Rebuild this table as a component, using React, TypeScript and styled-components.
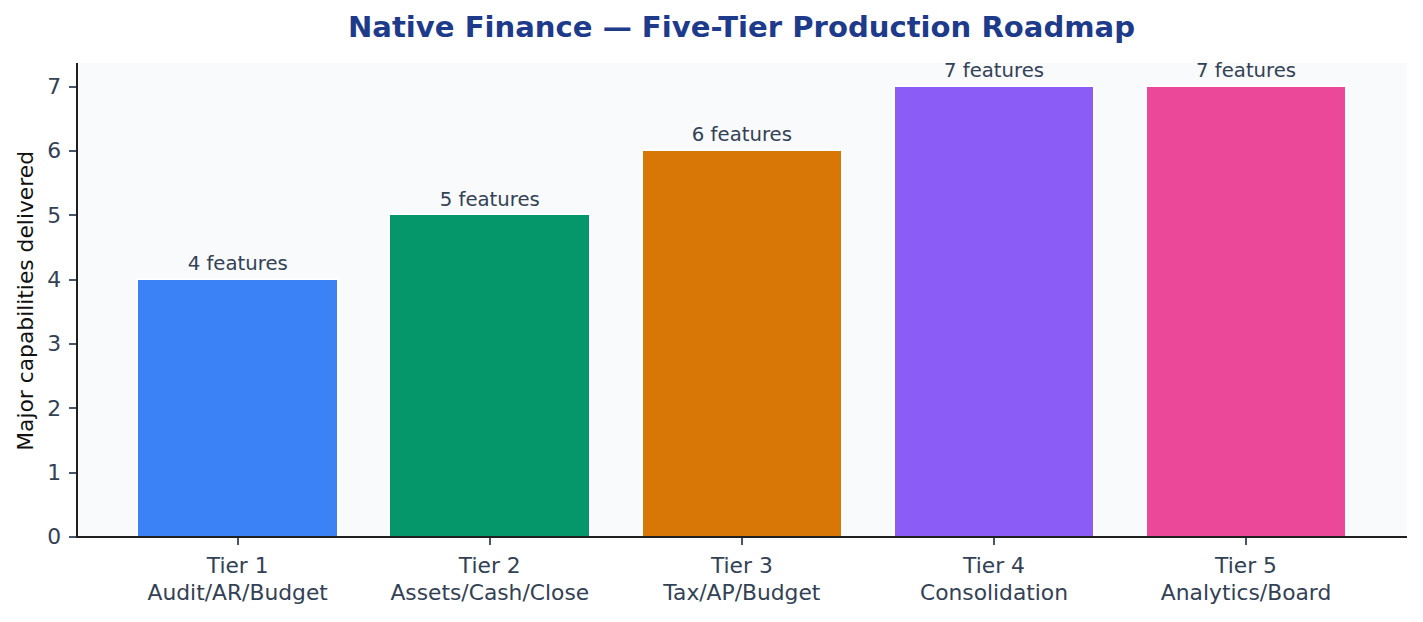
import React from "react";
import styled, { createGlobalStyle } from "styled-components";

const UNIT = 64.33;
const COL = 252.1;

const GlobalStyle = createGlobalStyle`
  html, body {
    margin: 0;
    padding: 0;
    background: #ffffff;
  }
  body {
    width: 1423px;
    height: 622px;
    overflow: hidden;
    font-family: "DejaVu Sans", "Liberation Sans", sans-serif;
  }
`;

const Figure = styled.div`
  width: 1423px;
  height: 622px;
  box-sizing: border-box;
  padding-top: 9.8px;
  display: grid;
  grid-template-columns: 47px 29px 1331px;
  grid-template-rows: 34px 19.2px 475.1px auto;
`;

const Title = styled.h1`
  grid-column: 3;
  grid-row: 1;
  margin: 0;
  font-size: 29.1px;
  line-height: 34px;
  font-weight: 700;
  color: #1e3a8a;
  text-align: center;
  white-space: nowrap;
`;

const YLabelCell = styled.div`
  grid-column: 1;
  grid-row: 3;
  display: flex;
  align-items: center;
  justify-content: center;
  padding-left: 4px;
`;

const YLabel = styled.div`
  writing-mode: vertical-rl;
  transform: rotate(180deg);
  font-size: 21.8px;
  line-height: 25.4px;
  color: #111111;
  white-space: nowrap;
`;

const YAxis = styled.div`
  grid-column: 2;
  grid-row: 3;
  align-self: end;
  margin-bottom: -31.17px;
  display: flex;
  flex-direction: column-reverse;
`;

const YTick = styled.div`
  height: ${UNIT}px;
  display: flex;
  align-items: center;
  justify-content: flex-end;
  gap: 8px;
`;

const TickLabel = styled.span`
  font-size: 21.8px;
  line-height: 25.4px;
  color: #334155;
  white-space: nowrap;
`;

const YTickMark = styled.span`
  flex: none;
  width: 7px;
  height: 2px;
  background: #475569;
`;

const Plot = styled.div`
  grid-column: 3;
  grid-row: 3;
  box-sizing: border-box;
  height: 475.1px;
  background: #f8fafc;
  border-left: 2px solid #1f1f1f;
  border-bottom: 2px solid #1f1f1f;
  padding-left: 33.65px;
  display: grid;
  grid-template-columns: repeat(5, ${COL}px);
  grid-template-rows: minmax(0, 1fr);
  overflow: visible;
`;

const BarSlot = styled.div`
  display: flex;
  flex-direction: column;
  align-items: center;
  justify-content: flex-end;
  min-height: 0;
  height: 100%;
`;

const BarLabel = styled.span`
  flex: none;
  font-size: 19.7px;
  line-height: 23px;
  color: #334155;
  white-space: nowrap;
  margin-bottom: 2.8px;
`;

const Bar = styled.div<{ $color: string }>`
  flex: none;
  box-sizing: border-box;
  width: 202.7px;
  background: ${(p) => p.$color};
  border: 2px solid #ffffff;
  border-bottom: 0;
`;

const XAxis = styled.div`
  grid-column: 3;
  grid-row: 4;
  padding-left: 35.65px;
  display: grid;
  grid-template-columns: repeat(5, ${COL}px);
  align-items: start;
`;

const XTick = styled.div`
  display: flex;
  flex-direction: column;
  align-items: center;
`;

const XTickMark = styled.span`
  width: 2px;
  height: 7px;
  background: #475569;
  margin-bottom: 6.6px;
`;

const XTickLabel = styled.span`
  font-size: 21.8px;
  line-height: 27.2px;
  color: #334155;
  white-space: nowrap;
  text-align: center;
`;

const tiers = [
  { name: "Tier 1", sub: "Audit/AR/Budget", value: 4, color: "#3b82f6" },
  { name: "Tier 2", sub: "Assets/Cash/Close", value: 5, color: "#059669" },
  { name: "Tier 3", sub: "Tax/AP/Budget", value: 6, color: "#d97706" },
  { name: "Tier 4", sub: "Consolidation", value: 7, color: "#8b5cf6" },
  { name: "Tier 5", sub: "Analytics/Board", value: 7, color: "#ec4899" },
];

const yTicks = [0, 1, 2, 3, 4, 5, 6, 7];

export default function App() {
  return (
    <>
      <GlobalStyle />
      <Figure>
        <Title>Native Finance — Five-Tier Production Roadmap</Title>
        <YLabelCell>
          <YLabel>Major capabilities delivered</YLabel>
        </YLabelCell>
        <YAxis>
          {yTicks.map((t) => (
            <YTick key={t}>
              <TickLabel>{t}</TickLabel>
              <YTickMark />
            </YTick>
          ))}
        </YAxis>
        <Plot>
          {tiers.map((t) => (
            <BarSlot key={t.name}>
              <BarLabel>{t.value} features</BarLabel>
              <Bar $color={t.color} style={{ height: `${t.value * UNIT + 1}px` }} />
            </BarSlot>
          ))}
        </Plot>
        <XAxis>
          {tiers.map((t) => (
            <XTick key={t.name}>
              <XTickMark />
              <XTickLabel>
                {t.name}
                <br />
                {t.sub}
              </XTickLabel>
            </XTick>
          ))}
        </XAxis>
      </Figure>
    </>
  );
}
